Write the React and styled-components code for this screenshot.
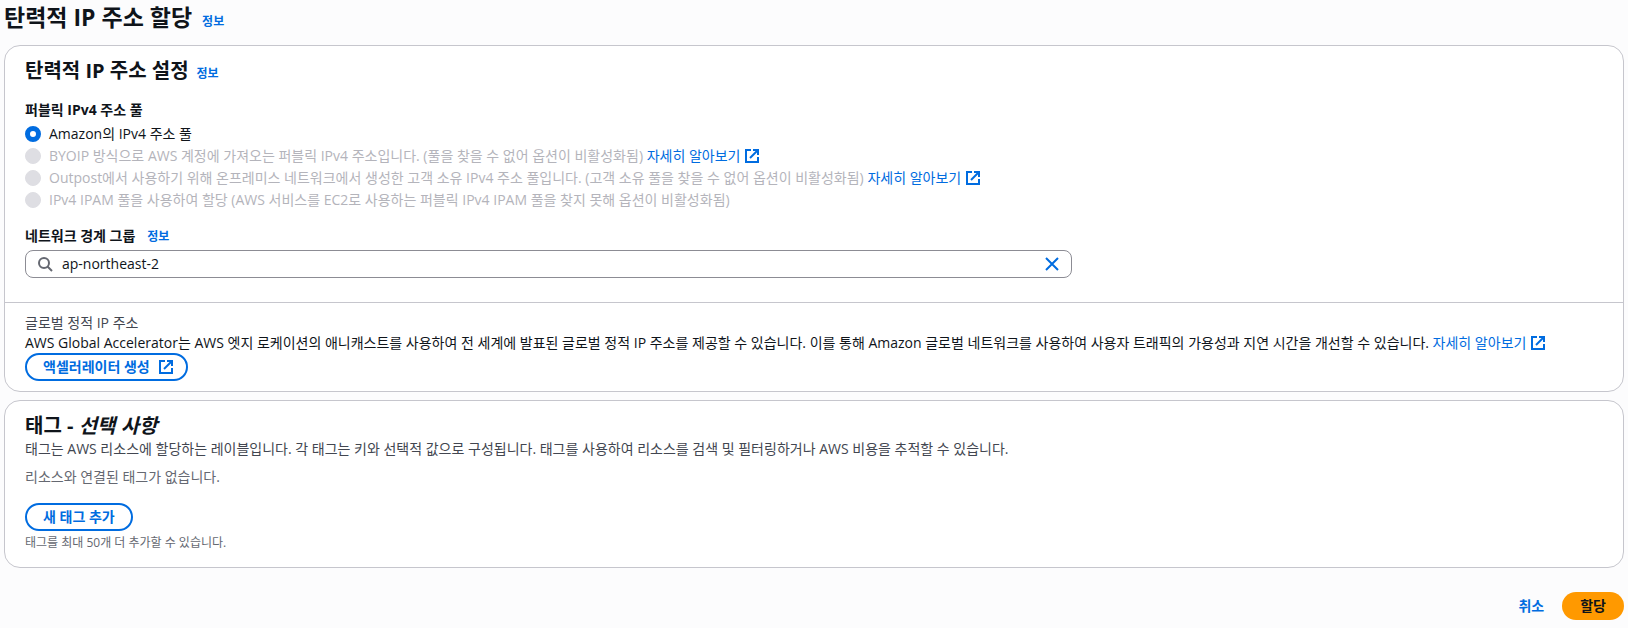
import React, {useState} from 'react';
import styled, {createGlobalStyle, css} from 'styled-components';

const GlobalStyle = createGlobalStyle`
  *, *::before, *::after {
    box-sizing: border-box;
  }

  body {
    margin: 0;
    background-color: #fcfcfd;
    color: #0f141a;
    font-family: 'Open Sans', 'Noto Sans CJK KR', sans-serif;
    font-size: 14px;
    line-height: 20px;
  }
`;

const StyledPage = styled.form`
  display: flex;
  flex-direction: column;
  gap: 8px;
  padding: 0 4px 8px;
`;

const StyledPageHeader = styled.header`
  display: flex;
  align-items: baseline;
  gap: 10px;
  padding: 2px 0 5px;
`;

const StyledPageTitle = styled.h1`
  margin: 0;
  font-size: 23px;
  line-height: 30px;
  font-weight: 700;
`;

const StyledCard = styled.section`
  border: 1px solid #c6c6cd;
  border-radius: 16px;
  background-color: #ffffff;
`;

const StyledCardHeader = styled.div`
  display: flex;
  align-items: baseline;
  gap: 8px;
  padding: 13px 20px 0;
`;

const StyledCardTitle = styled.h2`
  margin: 0;
  font-size: 20px;
  line-height: 24px;
  font-weight: 700;
`;

const StyledCardBody = styled.div`
  display: flex;
  flex-direction: column;
  gap: 16px;
  padding: 17px 20px 24px;
`;

const StyledCardFooter = styled.div`
  display: flex;
  flex-direction: column;
  align-items: flex-start;
  padding: 10px 20px;
  border-top: 1px solid #c6c6cd;
`;

const linkColor = css`
  color: #006ce0;
  text-decoration: none;
  :hover {
    color: #002b66;
  }
`;

const StyledInfoLink = styled.a`
  ${linkColor}
  font-size: 12px;
  line-height: 16px;
  font-weight: 700;
`;

const StyledExternalLink = styled.a`
  ${linkColor}
  svg {
    margin-left: 4px;
    vertical-align: -3px;
  }
`;

const StyledFieldset = styled.fieldset`
  display: flex;
  flex-direction: column;
  gap: 2px;
  min-width: 0;
  margin: 0;
  padding: 0;
  border: 0;
`;

const StyledLegend = styled.legend`
  padding: 0 0 4px;
  font-weight: 700;
`;

const StyledRadioRow = styled.div`
  display: flex;
  align-items: center;
  gap: 8px;
  color: ${props => (props.$disabled ? '#b4b4bb' : '#0f141a')};
`;

const StyledRadio = styled.input.attrs({type: 'radio'})`
  appearance: none;
  flex: none;
  width: 16px;
  height: 16px;
  margin: 0;
  border: 1px solid #8c8c94;
  border-radius: 50%;
  background-color: #ffffff;

  &:checked {
    border: 5px solid #006ce0;
  }

  &:disabled {
    border-color: #dedee3;
    background-color: #dedee3;
  }
`;

const StyledField = styled.div`
  display: grid;
  grid-template-columns: 2fr 1fr;
  column-gap: 8px;
  row-gap: 4px;
`;

const StyledFieldLabel = styled.div`
  display: flex;
  grid-column: 1 / -1;
  align-items: baseline;
  gap: 12px;
  label {
    font-weight: 700;
  }
`;

const StyledSearchBox = styled.div`
  display: flex;
  align-items: center;
  gap: 9px;
  height: 28px;
  padding: 0 11px;
  border: 1px solid #8c8c94;
  border-radius: 8px;
  background-color: #ffffff;
`;

const StyledSearchInput = styled.input`
  flex: 1;
  min-width: 0;
  padding: 0;
  border: 0;
  outline: 0;
  background: transparent;
  color: #0f141a;
  font: inherit;
`;

const StyledIconButton = styled.button`
  display: flex;
  padding: 0;
  border: 0;
  background: transparent;
  color: #006ce0;
  cursor: pointer;
`;

const StyledButton = styled.button`
  display: inline-flex;
  align-items: center;
  justify-content: center;
  gap: 8px;
  height: 28px;
  padding: 0 16px;
  border: 2px solid ${props => (props.$variant ? 'transparent' : '#006ce0')};
  border-radius: 20px;
  background: ${props => (props.$variant === 'primary' ? '#ff9900' : 'transparent')}
    border-box;
  color: ${props => (props.$variant === 'primary' ? '#0f141a' : '#006ce0')};
  font: inherit;
  font-weight: 700;
  cursor: pointer;
  svg {
    margin-right: -4px;
  }
`;

const StyledText = styled.p`
  margin: 0;
  color: ${props => props.$color || '#0f141a'};
`;

const StyledTagList = styled.div`
  display: flex;
  flex-direction: column;
  align-items: flex-start;
  gap: 16px;
  padding: 1px 20px 16px;
`;

const StyledStack = styled.div`
  display: flex;
  flex-direction: column;
  align-items: flex-start;
  gap: ${props => props.$gap}px;
`;

const StyledHint = styled.small`
  color: #656871;
  font-size: 12px;
  line-height: 16px;
`;

const StyledActions = styled.footer`
  display: flex;
  justify-content: flex-end;
  padding-top: 16px;
`;

const ExternalIcon = () => (
  <svg width="16" height="16" viewBox="0 0 16 16" fill="none" stroke="currentColor" strokeWidth="2" aria-hidden="true">
    <path d="M9 2h5v5" />
    <path d="m6 10 8-8" />
    <path d="M14 9v5H2V2h5" />
  </svg>
);

const SearchIcon = () => (
  <svg width="16" height="16" viewBox="0 0 16 16" fill="none" stroke="#656871" strokeWidth="2" aria-hidden="true">
    <circle cx="7" cy="7" r="5" />
    <path d="m15 15-4.5-4.5" />
  </svg>
);

const CloseIcon = () => (
  <svg width="16" height="16" viewBox="0 0 16 16" fill="none" stroke="currentColor" strokeWidth="2" aria-hidden="true">
    <path d="m2 2 12 12M14 2 2 14" />
  </svg>
);

const InfoLink = () => <StyledInfoLink href="#info">정보</StyledInfoLink>;

const LearnMore = () => (
  <StyledExternalLink href="#learn-more">
    자세히 알아보기
    <ExternalIcon />
  </StyledExternalLink>
);

const POOLS = [
  {id: 'amazon', label: 'Amazon의 IPv4 주소 풀'},
  {
    id: 'byoip',
    label: 'BYOIP 방식으로 AWS 계정에 가져오는 퍼블릭 IPv4 주소입니다. (풀을 찾을 수 없어 옵션이 비활성화됨)',
    disabled: true,
    learnMore: true
  },
  {
    id: 'outpost',
    label:
      'Outpost에서 사용하기 위해 온프레미스 네트워크에서 생성한 고객 소유 IPv4 주소 풀입니다. (고객 소유 풀을 찾을 수 없어 옵션이 비활성화됨)',
    disabled: true,
    learnMore: true
  },
  {
    id: 'ipam',
    label: 'IPv4 IPAM 풀을 사용하여 할당 (AWS 서비스를 EC2로 사용하는 퍼블릭 IPv4 IPAM 풀을 찾지 못해 옵션이 비활성화됨)',
    disabled: true
  }
];

const AddressSettings = () => {
  const [pool, setPool] = useState('amazon');
  const [group, setGroup] = useState('ap-northeast-2');

  return (
    <StyledCard>
      <StyledCardHeader>
        <StyledCardTitle>탄력적 IP 주소 설정</StyledCardTitle>
        <InfoLink />
      </StyledCardHeader>
      <StyledCardBody>
        <StyledFieldset>
          <StyledLegend>퍼블릭 IPv4 주소 풀</StyledLegend>
          {POOLS.map(({id, label, disabled, learnMore}) => (
            <StyledRadioRow key={id} $disabled={disabled}>
              <StyledRadio
                id={id}
                name="pool"
                checked={pool === id}
                disabled={disabled}
                onChange={() => setPool(id)}
              />
              <div>
                <label htmlFor={id}>{label}</label> {learnMore && <LearnMore />}
              </div>
            </StyledRadioRow>
          ))}
        </StyledFieldset>
        <StyledField>
          <StyledFieldLabel>
            <label htmlFor="border-group">네트워크 경계 그룹</label>
            <InfoLink />
          </StyledFieldLabel>
          <StyledSearchBox>
            <SearchIcon />
            <StyledSearchInput
              id="border-group"
              type="text"
              value={group}
              onChange={e => setGroup(e.target.value)}
            />
            <StyledIconButton type="button" aria-label="지우기" onClick={() => setGroup('')}>
              <CloseIcon />
            </StyledIconButton>
          </StyledSearchBox>
        </StyledField>
      </StyledCardBody>
      <StyledCardFooter>
        <StyledText $color="#424650">글로벌 정적 IP 주소</StyledText>
        <StyledText>
          AWS Global Accelerator는 AWS 엣지 로케이션의 애니캐스트를 사용하여 전 세계에 발표된 글로벌 정적 IP 주소를 제공할 수
          있습니다. 이를 통해 Amazon 글로벌 네트워크를 사용하여 사용자 트래픽의 가용성과 지연 시간을 개선할 수 있습니다.{' '}
          <LearnMore />
        </StyledText>
        <StyledButton type="button">
          액셀러레이터 생성
          <ExternalIcon />
        </StyledButton>
      </StyledCardFooter>
    </StyledCard>
  );
};

const Tags = () => (
  <StyledCard>
    <StyledCardHeader>
      <StyledCardTitle>
        태그 - <em>선택 사항</em>
      </StyledCardTitle>
    </StyledCardHeader>
    <StyledTagList>
      <StyledStack $gap={8}>
        <StyledText $color="#424650">
          태그는 AWS 리소스에 할당하는 레이블입니다. 각 태그는 키와 선택적 값으로 구성됩니다. 태그를 사용하여 리소스를 검색 및
          필터링하거나 AWS 비용을 추적할 수 있습니다.
        </StyledText>
        <StyledText $color="#656871">리소스와 연결된 태그가 없습니다.</StyledText>
      </StyledStack>
      <StyledStack $gap={4}>
        <StyledButton type="button">새 태그 추가</StyledButton>
        <StyledHint>태그를 최대 50개 더 추가할 수 있습니다.</StyledHint>
      </StyledStack>
    </StyledTagList>
  </StyledCard>
);

const App = () => (
  <>
    <GlobalStyle />
    <StyledPage onSubmit={e => e.preventDefault()}>
      <StyledPageHeader>
        <StyledPageTitle>탄력적 IP 주소 할당</StyledPageTitle>
        <InfoLink />
      </StyledPageHeader>
      <AddressSettings />
      <Tags />
      <StyledActions>
        <StyledButton type="button" $variant="link">
          취소
        </StyledButton>
        <StyledButton type="submit" $variant="primary">
          할당
        </StyledButton>
      </StyledActions>
    </StyledPage>
  </>
);

export default App;
